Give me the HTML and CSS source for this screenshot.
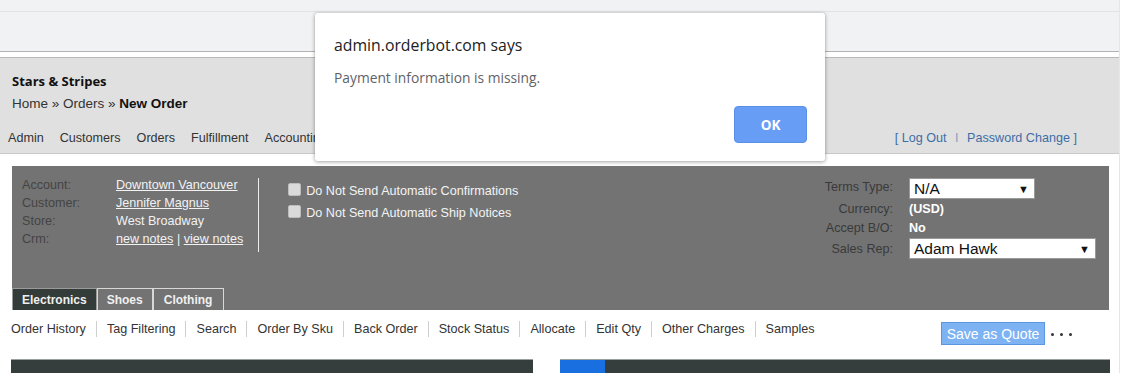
FILE: index.html
```html
<!DOCTYPE html>
<html lang="en">
<head>
    <meta charset="UTF-8">
    <meta name="viewport" content="width=device-width, initial-scale=1.0">
    <title>New Order</title>
    <link rel="stylesheet" href="styles.css">
</head>
<body>
    <div class="page">
        <div class="browser-strip"></div>
        <div class="browser-toolbar"></div>
        <div class="browser-gap"></div>

        <div class="header">
            <div class="company">Stars &amp; Stripes</div>
            <div class="crumbs">Home &raquo; Orders &raquo; <b>New Order</b></div>
            <div class="nav-row">
                <nav class="main-nav">
                    <a href="#">Admin</a>
                    <a href="#">Customers</a>
                    <a href="#">Orders</a>
                    <a href="#">Fulfillment</a>
                    <a href="#">Accounting</a>
                </nav>
                <div class="account-links">
                    [ <a href="#">Log Out</a> <span class="pipe">I</span> <a href="#">Password Change</a> ]
                </div>
            </div>
        </div>

        <div class="order-panel">
            <div class="panel-top">
                <div class="info">
                    <div class="info-label">Account:</div>
                    <div class="info-value"><a href="#">Downtown Vancouver</a></div>
                    <div class="info-label">Customer:</div>
                    <div class="info-value"><a href="#">Jennifer Magnus</a></div>
                    <div class="info-label">Store:</div>
                    <div class="info-value">West Broadway</div>
                    <div class="info-label">Crm:</div>
                    <div class="info-value"><a href="#">new notes</a> | <a href="#">view notes</a></div>
                </div>
                <div class="divider"></div>
                <div class="notices">
                    <label class="notice"><input type="checkbox"> Do Not Send Automatic Confirmations</label>
                    <label class="notice"><input type="checkbox"> Do Not Send Automatic Ship Notices</label>
                </div>
                <div class="terms">
                    <div class="terms-label">Terms Type:</div>
                    <div class="select short"><span>N/A</span><span class="arrow">&#9660;</span></div>
                    <div class="terms-label">Currency:</div>
                    <div class="terms-value">(USD)</div>
                    <div class="terms-label">Accept B/O:</div>
                    <div class="terms-value">No</div>
                    <div class="terms-label">Sales Rep:</div>
                    <div class="select long"><span>Adam Hawk</span><span class="arrow">&#9660;</span></div>
                </div>
            </div>
            <div class="tabs">
                <div class="tab active">Electronics</div>
                <div class="tab">Shoes</div>
                <div class="tab">Clothing</div>
            </div>
        </div>

        <div class="actions">
            <div class="action-links">
                <a href="#">Order History</a>
                <a href="#">Tag Filtering</a>
                <a href="#">Search</a>
                <a href="#">Order By Sku</a>
                <a href="#">Back Order</a>
                <a href="#">Stock Status</a>
                <a href="#">Allocate</a>
                <a href="#">Edit Qty</a>
                <a href="#">Other Charges</a>
                <a href="#">Samples</a>
            </div>
            <button class="quote-btn">Save as Quote</button>
            <span class="dots"><i></i><i></i><i></i></span>
        </div>

        <div class="grids">
            <div class="grid left"></div>
            <div class="grid right">
                <div class="grid-tab"></div>
            </div>
        </div>
    </div>

    <div class="dialog">
        <div class="dialog-title">admin.orderbot.com says</div>
        <div class="dialog-msg">Payment information is missing.</div>
        <div class="dialog-foot">
            <button class="ok-btn">OK</button>
        </div>
    </div>
</body>
</html>
```

FILE: styles.css
```css
*, *::after, *::before {
    box-sizing: border-box;
}

body {
    margin: 0;
    background: #fff;
    font-family: 'Liberation Sans', Arial, sans-serif;
    font-size: 12.6px;
    color: #333;
    overflow: hidden;
}

a {
    color: inherit;
    text-decoration: none;
}

.page {
    width: 1120px;
    height: 373px;
    border-right: 1px solid #e6e6e6;
}

/* browser chrome behind the alert */
.browser-strip {
    height: 12px;
    background: #f1f2f4;
    border-bottom: 1px solid #e2e3e5;
}

.browser-toolbar {
    height: 40px;
    background: #f1f2f4;
    border-bottom: 1px solid #b3b3b3;
}

.browser-gap {
    height: 6px;
    background: #fff;
    border-bottom: 1px solid #b9b9b9;
}

.header {
    height: 96px;
    background: #e0e0e0;
    border-bottom: 1px solid #c9c9c9;
    padding: 14px 0 0 12px;
}

.company {
    font-family: 'Open Sans', sans-serif;
    font-weight: bold;
    font-size: 13px;
    line-height: 18px;
    color: #111;
}

.crumbs {
    margin-top: 5px;
    font-size: 13.5px;
    line-height: 18px;
    color: #333;
}

.crumbs b {
    color: #111;
}

.nav-row {
    display: flex;
    align-items: center;
    justify-content: space-between;
    margin: 16px 0 0 -4px;
    padding-right: 42px;
    line-height: 18px;
}

.main-nav {
    display: flex;
    gap: 16px;
    color: #333;
}

.account-links {
    color: #3c6ea6;
}

.account-links .pipe {
    color: #8a9fb8;
    margin: 0 5px;
}

/* order summary panel */
.order-panel {
    margin: 12px 10px 0 12px;
    height: 144px;
    background: #737373;
    display: flex;
    flex-direction: column;
}

.panel-top {
    display: flex;
    align-items: flex-start;
    padding: 10px 13px 0 10px;
}

.info {
    display: grid;
    grid-template-columns: 94px auto;
    line-height: 18px;
    padding-right: 15px;
}

.info-label {
    color: #444;
}

.info-value {
    color: #f2f2f2;
}

.info-value a {
    text-decoration: underline;
}

.divider {
    width: 1px;
    height: 74px;
    margin-top: 2px;
    background: #ececec;
}

.notices {
    display: flex;
    flex-direction: column;
    gap: 5px;
    padding: 7px 0 0 29px;
    color: #f4f4f4;
}

.notice {
    display: flex;
    align-items: center;
    gap: 5px;
    line-height: 17px;
}

.notice input {
    appearance: none;
    margin: 0;
    width: 13px;
    height: 13px;
    background: #dadada;
    border: 1px solid #bdbdbd;
    border-radius: 2px;
    position: relative;
    top: -2px;
}

.terms {
    margin: 2px 0 0 auto;
    display: grid;
    grid-template-columns: auto auto;
    column-gap: 16px;
    row-gap: 1px;
    align-items: center;
}

.terms-label {
    text-align: right;
    color: #3a3a3a;
    line-height: 18px;
}

.terms-label:first-child {
    position: relative;
    top: -2px;
}

.terms-value {
    color: #fff;
    font-weight: bold;
    line-height: 18px;
}

.select {
    height: 21px;
    background: #fff;
    border: 1px solid #9a9a9a;
    display: flex;
    align-items: center;
    justify-content: space-between;
    padding: 0 5px 0 4px;
    font-size: 15.5px;
    color: #111;
}

.select .arrow {
    font-size: 11px;
}

.select.short {
    width: 126px;
}

.select.long {
    width: 187px;
}

.tabs {
    margin-top: auto;
    display: flex;
}

.tab {
    height: 22px;
    padding: 0 9px;
    display: flex;
    align-items: center;
    font-size: 12px;
    font-weight: bold;
    color: #f0f0f0;
    background: #737373;
    border: 1px solid #d8d8d8;
    border-bottom: none;
}

.tab:last-child {
    padding: 0 11px 0 10px;
}

.tab.active {
    background: #343c3a;
    border-color: #9a9a9a;
}

/* links under the panel */
.actions {
    display: flex;
    align-items: flex-start;
    padding: 11px 0 0 11px;
    height: 49px;
}

.action-links {
    display: flex;
    line-height: 16px;
}

.action-links a {
    padding: 0 10px;
    border-left: 1px solid #cfcfcf;
    color: #333;
}

.action-links a:first-child {
    padding-left: 0;
    border-left: none;
}

.quote-btn {
    margin: 1px 0 0 auto;
    height: 23px;
    width: 104px;
    padding: 0;
    background: #7db3f3;
    border: 1px solid #5b97e0;
    color: #fff;
    font-family: 'Liberation Sans', Arial, sans-serif;
    font-size: 14px;
}

.dots {
    display: flex;
    gap: 6px;
    margin: 12px 47px 0 6px;
}

.dots i {
    width: 3px;
    height: 3px;
    border-radius: 50%;
    background: #333;
}

.grids {
    display: flex;
    padding-left: 11px;
    gap: 27px;
}

.grid {
    height: 20px;
    background: #353e3c;
    border-top: 1px solid #9aa09f;
}

.grid.left {
    width: 522px;
}

.grid.right {
    width: 550px;
}

.grid-tab {
    width: 45px;
    height: 100%;
    background: #1a6fe0;
}

/* browser alert */
.dialog {
    position: absolute;
    left: 315px;
    top: 13px;
    width: 510px;
    height: 148px;
    background: #fff;
    border-radius: 2px;
    box-shadow: 0 1px 4px rgba(0, 0, 0, 0.35), 0 0 1px rgba(0, 0, 0, 0.3);
    padding: 20px 18px 0 19px;
    font-family: 'Open Sans', 'Noto Sans', sans-serif;
}

.dialog-title {
    font-size: 15.8px;
    line-height: 24px;
    color: #202124;
}

.dialog-msg {
    margin-top: 11px;
    font-size: 13.8px;
    line-height: 20px;
    color: #5f6368;
}

.dialog-foot {
    display: flex;
    justify-content: flex-end;
    margin-top: 18px;
}

.ok-btn {
    width: 73px;
    height: 37px;
    background: #689df6;
    border: 1px solid #5a8fe8;
    border-radius: 4px;
    color: #fff;
    font-family: 'Open Sans', sans-serif;
    font-weight: bold;
    font-size: 13.5px;
}
```
